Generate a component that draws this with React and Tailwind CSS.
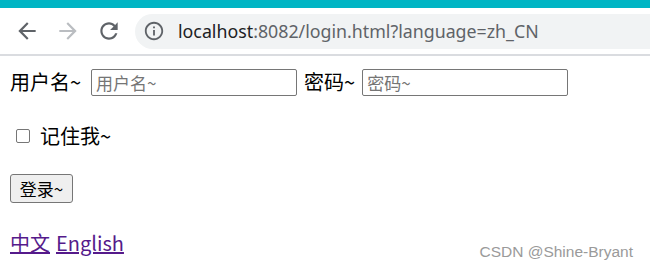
import React from 'react';

const cjk = { fontFamily: '"Noto Sans CJK SC", "Noto Sans", sans-serif' };

const BackIcon = ({ className }) => (
  <svg viewBox="0 0 24 24" className={className} fill="currentColor">
    <path d="M20 11H7.83l5.59-5.59L12 4l-8 8 8 8 1.41-1.41L7.83 13H20v-2z" />
  </svg>
);

const ForwardIcon = ({ className }) => (
  <svg viewBox="0 0 24 24" className={className} fill="currentColor">
    <path d="M12 4l-1.41 1.41L16.17 11H4v2h12.17l-5.58 5.59L12 20l8-8z" />
  </svg>
);

const ReloadIcon = ({ className }) => (
  <svg viewBox="0 0 24 24" className={className} fill="currentColor">
    <path d="M17.65 6.35C16.2 4.9 14.21 4 12 4c-4.42 0-7.99 3.58-7.99 8s3.57 8 7.99 8c3.73 0 6.84-2.55 7.73-6h-2.08c-.82 2.33-3.04 4-5.65 4-3.31 0-6-2.69-6-6s2.69-6 6-6c1.66 0 3.14.69 4.22 1.78L13 11h7V4l-2.35 2.35z" />
  </svg>
);

const InfoIcon = ({ className }) => (
  <svg viewBox="0 0 24 24" className={className} fill="currentColor">
    <path d="M11 7h2v2h-2zm0 4h2v6h-2zm1-9C6.48 2 2 6.48 2 12s4.48 10 10 10 10-4.48 10-10S17.52 2 12 2zm0 18c-4.41 0-8-3.59-8-8s3.59-8 8-8 8 3.59 8 8-3.59 8-8 8z" />
  </svg>
);

// browser chrome above the page
const Toolbar = () => (
  <div className="flex flex-col">
    <div className="h-[8px] bg-[#00b5c4]" />
    <div className="h-[46px] flex items-center bg-white">
      <div className="flex items-center pl-[14px] gap-[15px]">
        <BackIcon className="w-[26px] h-[26px] text-[#5f6368]" />
        <ForwardIcon className="w-[26px] h-[26px] text-[#babdc1]" />
        <ReloadIcon className="w-[26px] h-[26px] text-[#5f6368]" />
      </div>
      <div className="ml-[13px] flex-1 h-[35px] rounded-l-full bg-[#f1f3f4] flex items-center pl-[8px]">
        <InfoIcon className="w-[22px] h-[22px] text-[#5f6368]" />
        <span
          className="ml-[13px] text-[17.8px] whitespace-nowrap"
          style={{ fontFamily: '"Noto Sans", sans-serif' }}
        >
          <span className="text-[#202124]">localhost</span>
          <span className="text-[#5f6368]">:8082/login.html?language=zh_CN</span>
        </span>
      </div>
    </div>
    <div className="h-[2px] bg-[#dadce0]" />
  </div>
);

const Field = ({ placeholder, type = 'text' }) => (
  <input
    type={type}
    placeholder={placeholder}
    className="w-[206px] h-[27px] border border-[#767676] rounded-[2px] px-[4px] text-[17px] text-black placeholder:text-[#757575] outline-none"
    style={cjk}
  />
);

export default function App() {
  return (
    <div className="relative w-[650px] h-[272px] overflow-hidden bg-white">
      <Toolbar />

      <form className="flex flex-col px-[10px] pt-[10px] text-[20px] text-black" style={cjk}>
        <div className="h-[31px] flex items-center">
          <span>用户名~</span>
          <span className="ml-[10px]"><Field placeholder="用户名~" /></span>
          <span className="ml-[7px]">密码~</span>
          <span className="ml-[7px]"><Field placeholder="密码~" type="password" /></span>
        </div>

        <label className="mt-[24px] h-[30px] flex items-center">
          <input
            type="checkbox"
            className="appearance-none ml-[6px] w-[14px] h-[14px] border border-[#767676] rounded-[2px] bg-white"
          />
          <span className="ml-[10px]">记住我~</span>
        </label>

        <div className="mt-[23px] h-[29px] flex">
          <button
            type="button"
            className="w-[63px] h-[29px] bg-[#efefef] border border-[#767676] rounded-[3px] text-[17px] leading-none"
          >
            登录~
          </button>
        </div>

        <div className="mt-[26px] h-[28px] flex items-center gap-[6px]">
          <a href="#" className="text-[#551a8b] underline">中文</a>
          <a href="#" className="text-[#551a8b] underline">English</a>
        </div>
      </form>

      {/* watermark */}
      <div
        className="absolute right-[17px] bottom-[9px] text-[15.5px] text-[#9a9a9a]"
        style={{ fontFamily: '"Liberation Sans", Arial, sans-serif' }}
      >
        CSDN @Shine-Bryant
      </div>
    </div>
  );
}
